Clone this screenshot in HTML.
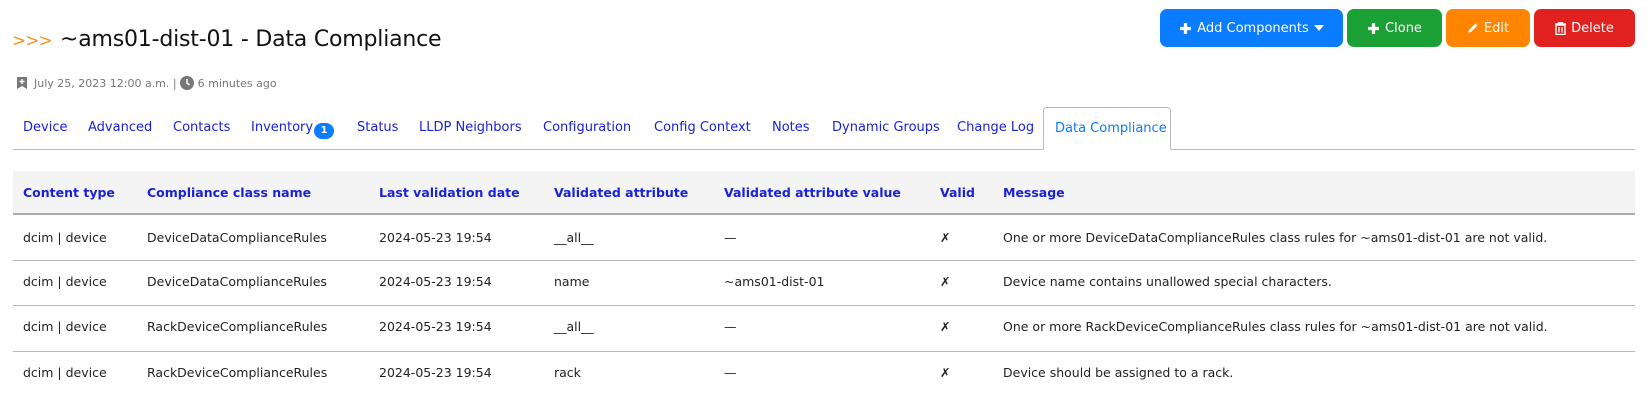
<!DOCTYPE html>
<html><head><meta charset="utf-8"><style>
*{box-sizing:border-box;margin:0;padding:0}
body{width:1651px;height:404px;background:#fff;font-family:"DejaVu Sans","Liberation Sans",sans-serif;font-size:12.5px;color:#222;position:relative;overflow:hidden}
.abs{position:absolute;white-space:nowrap}
.title{left:60px;top:26px;font-size:22px;line-height:28px;font-weight:500;color:#111;letter-spacing:-0.2px}
.arrows{left:12px;top:31px;color:#f7931e;font-size:17px;letter-spacing:-1px}
.meta{left:17px;top:76px;font-size:11px;color:#777}
.btn{position:absolute;top:9px;height:38px;border-radius:7px;color:#fff;font-size:13px;display:flex;align-items:center;justify-content:center;gap:5px}
.tabs{position:absolute;left:13px;top:149px;width:1622px;border-top:1px solid #bbb}
.tab{position:absolute;top:120px;color:#1a22d8;font-size:13px;white-space:nowrap;line-height:16px}
.active{position:absolute;left:1043px;top:107px;width:128px;height:43px;border:1px solid #bbb;border-bottom:1px solid #fff;border-radius:4px 4px 0 0;background:#fff;color:#0d7cf2;font-size:13px;padding:13px 0 0 11px;white-space:nowrap}
.thead{position:absolute;left:13px;top:171px;width:1622px;height:44px;background:#f4f4f4;border-bottom:2px solid #aaa}
.th{position:absolute;top:185px;font-weight:bold;color:#1a22d8;font-size:12.5px;white-space:nowrap;line-height:16px}
.sep{position:absolute;left:13px;width:1622px;border-top:1px solid #bbb}
.td{position:absolute;white-space:nowrap;font-size:12.5px;color:#222;line-height:16px}
</style></head><body>
<div class="abs arrows">&gt;&gt;&gt;</div>
<div class="abs title">~ams01-dist-01 - Data Compliance</div>
<div class="abs meta"><svg width="10" height="12" viewBox="0 0 10 12" style="vertical-align:-2px"><path d="M0 0H10V12L5 9L0 12Z" fill="#777"/><path d="M5 2V7M2.5 4.5H7.5" stroke="#fff" stroke-width="1.4"/></svg> &nbsp;July 25, 2023 12:00 a.m. | <svg width="14" height="14" viewBox="0 0 14 14" style="vertical-align:-3px"><circle cx="7" cy="7" r="7" fill="#777"/><path d="M7 3V7L9.5 9" stroke="#fff" stroke-width="1.5" fill="none"/></svg> 6 minutes ago</div>

<div class="btn" style="left:1160px;width:183px;background:#0a7cff">
<svg width="13" height="13" viewBox="0 0 12 12"><path d="M6 1V11M1 6H11" stroke="#fff" stroke-width="3"/></svg> Add Components <svg width="10" height="6" viewBox="0 0 10 6"><path d="M0 0H10L5 6Z" fill="#fff"/></svg></div>
<div class="btn" style="left:1347px;width:95px;background:#1aa035">
<svg width="13" height="13" viewBox="0 0 12 12"><path d="M6 1V11M1 6H11" stroke="#fff" stroke-width="3"/></svg> Clone</div>
<div class="btn" style="left:1446px;width:84px;background:#ff8400">
<svg width="12" height="12" viewBox="0 0 12 12"><path d="M1 11L2 8L8.5 1.5L10.5 3.5L4 10Z" fill="#fff"/></svg> Edit</div>
<div class="btn" style="left:1534px;width:101px;background:#e12020">
<svg width="11" height="13" viewBox="0 0 11 12"><path d="M0 1.5H11M3.5 1.5V0.3H7.5V1.5M1 2.5H10V12H1Z" stroke="#fff" stroke-width="1.4" fill="none"/><path d="M4 4.5V10M7 4.5V10" stroke="#fff" stroke-width="1.3"/></svg> Delete</div>

<div class="tabs"></div>
<div class="tab" style="left:23px">Device</div>
<div class="tab" style="left:88px">Advanced</div>
<div class="tab" style="left:173px">Contacts</div>
<div class="tab" style="left:251px">Inventory<span style="display:inline-block;background:#0a7cff;color:#fff;border-radius:9px;font-size:10px;font-weight:bold;width:20px;height:16px;text-align:center;line-height:16px;margin-left:1px;vertical-align:-2px">1</span></div>
<div class="tab" style="left:357px">Status</div>
<div class="tab" style="left:419px">LLDP Neighbors</div>
<div class="tab" style="left:543px">Configuration</div>
<div class="tab" style="left:654px">Config Context</div>
<div class="tab" style="left:772px">Notes</div>
<div class="tab" style="left:832px">Dynamic Groups</div>
<div class="tab" style="left:957px">Change Log</div>
<div class="active">Data Compliance</div>

<div class="thead"></div>
<div class="th" style="left:23px">Content type</div>
<div class="th" style="left:147px">Compliance class name</div>
<div class="th" style="left:379px">Last validation date</div>
<div class="th" style="left:554px">Validated attribute</div>
<div class="th" style="left:724px">Validated attribute value</div>
<div class="th" style="left:940px">Valid</div>
<div class="th" style="left:1003px">Message</div>

<div class="sep" style="top:260px"></div>
<div class="sep" style="top:305px"></div>
<div class="sep" style="top:351px"></div>

<div class="td" style="left:23px;top:230px">dcim | device</div><div class="td" style="left:147px;top:230px">DeviceDataComplianceRules</div><div class="td" style="left:379px;top:230px">2024-05-23 19:54</div><div class="td" style="left:554px;top:230px">__all__</div><div class="td" style="left:724px;top:230px">—</div><div class="td" style="left:940px;top:230px">✗</div><div class="td" style="left:1003px;top:230px">One or more DeviceDataComplianceRules class rules for ~ams01-dist-01 are not valid.</div>

<div class="td" style="left:23px;top:274px">dcim | device</div><div class="td" style="left:147px;top:274px">DeviceDataComplianceRules</div><div class="td" style="left:379px;top:274px">2024-05-23 19:54</div><div class="td" style="left:554px;top:274px">name</div><div class="td" style="left:724px;top:274px">~ams01-dist-01</div><div class="td" style="left:940px;top:274px">✗</div><div class="td" style="left:1003px;top:274px">Device name contains unallowed special characters.</div>

<div class="td" style="left:23px;top:319px">dcim | device</div><div class="td" style="left:147px;top:319px">RackDeviceComplianceRules</div><div class="td" style="left:379px;top:319px">2024-05-23 19:54</div><div class="td" style="left:554px;top:319px">__all__</div><div class="td" style="left:724px;top:319px">—</div><div class="td" style="left:940px;top:319px">✗</div><div class="td" style="left:1003px;top:319px">One or more RackDeviceComplianceRules class rules for ~ams01-dist-01 are not valid.</div>

<div class="td" style="left:23px;top:365px">dcim | device</div><div class="td" style="left:147px;top:365px">RackDeviceComplianceRules</div><div class="td" style="left:379px;top:365px">2024-05-23 19:54</div><div class="td" style="left:554px;top:365px">rack</div><div class="td" style="left:724px;top:365px">—</div><div class="td" style="left:940px;top:365px">✗</div><div class="td" style="left:1003px;top:365px">Device should be assigned to a rack.</div>
</body></html>
